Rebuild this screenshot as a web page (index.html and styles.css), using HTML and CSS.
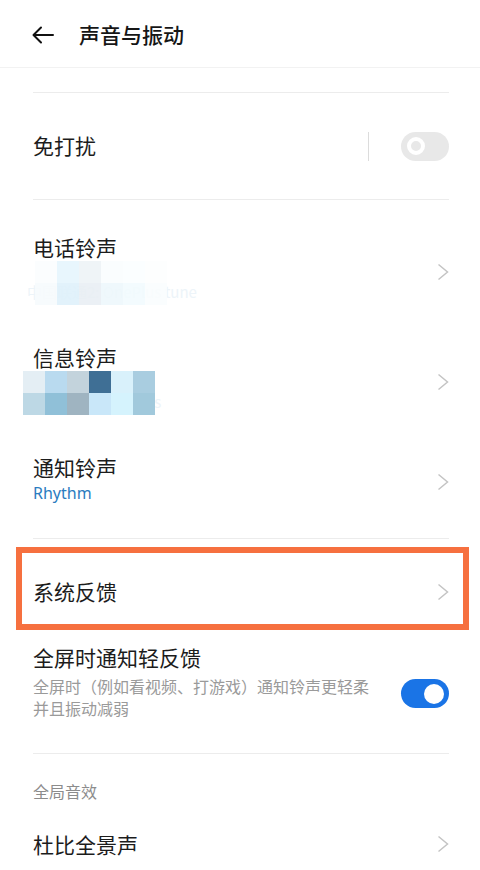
FILE: index.html
```html
<!DOCTYPE html>
<html lang="zh-CN">
<head>
    <meta charset="UTF-8">
    <meta name="viewport" content="width=device-width, initial-scale=1.0">
    <title>声音与振动</title>
    <link rel="stylesheet" href="styles.css">
</head>
<body>
    <header class="top-bar">
        <svg class="back-icon" width="22" height="18" viewBox="0 0 22 18">
            <path d="M21 9H2M9 1.5L1.5 9L9 16.5" fill="none" stroke="#111" stroke-width="2" stroke-linecap="round" stroke-linejoin="round"/>
        </svg>
        <h1 class="page-title">声音与振动</h1>
    </header>

    <div class="spacer"></div>
    <div class="divider"></div>

    <div class="row row-single">
        <span class="row-title">免打扰</span>
        <div class="row-right">
            <span class="v-sep"></span>
            <span class="switch switch-off"><span class="knob-ring"></span></span>
        </div>
    </div>
    <div class="divider"></div>

    <div class="row row-ring">
        <div class="row-text">
            <div class="row-title">电话铃声</div>
            <div class="mosaic mosaic-faint">
                <span class="mosaic-text">中国联通2: OnePlus tune</span>
                <div class="tiles">
                    <i style="background:#fbfdfe"></i><i style="background:#e6f6fd"></i><i style="background:#eef3f7"></i><i style="background:#fafdfe"></i><i style="background:#fbfeff"></i><i style="background:#fdfefe"></i>
                    <i style="background:#f7fbfd"></i><i style="background:#dff1fb"></i><i style="background:#e9eff4"></i><i style="background:#eef8fc"></i><i style="background:#f2fbfe"></i><i style="background:#fafdfe"></i>
                </div>
            </div>
        </div>
        <svg class="chevron" width="12" height="18" viewBox="0 0 12 18"><polyline points="1.5,1.5 10.5,9 1.5,16.5" fill="none" stroke="#c4c4c4" stroke-width="1.5"/></svg>
    </div>

    <div class="row row-ring">
        <div class="row-text">
            <div class="row-title">信息铃声</div>
            <div class="mosaic">
                <span class="mosaic-text">中国联通1: OnePlus</span>
                <div class="tiles tiles-strong">
                    <i style="background:#e4eef4"></i><i style="background:#b9daef"></i><i style="background:#c3d3dc"></i><i style="background:#3f6f95"></i><i style="background:#d9f1fb"></i><i style="background:#a9cde0"></i>
                    <i style="background:#bdd8e5"></i><i style="background:#90c0d8"></i><i style="background:#9fb4c1"></i><i style="background:#c9e7f9"></i><i style="background:#d5f3fd"></i><i style="background:#a1c9dc"></i>
                </div>
            </div>
        </div>
        <svg class="chevron" width="12" height="18" viewBox="0 0 12 18"><polyline points="1.5,1.5 10.5,9 1.5,16.5" fill="none" stroke="#c4c4c4" stroke-width="1.5"/></svg>
    </div>

    <div class="row row-ring row-last">
        <div class="row-text">
            <div class="row-title">通知铃声</div>
            <div class="row-value">Rhythm</div>
        </div>
        <svg class="chevron" width="12" height="18" viewBox="0 0 12 18"><polyline points="1.5,1.5 10.5,9 1.5,16.5" fill="none" stroke="#c4c4c4" stroke-width="1.5"/></svg>
    </div>
    <div class="divider"></div>

    <div class="highlight-box">
        <span class="row-title">系统反馈</span>
        <svg class="chevron" width="12" height="18" viewBox="0 0 12 18"><polyline points="1.5,1.5 10.5,9 1.5,16.5" fill="none" stroke="#c4c4c4" stroke-width="1.5"/></svg>
    </div>

    <div class="row row-desc">
        <div class="row-text">
            <div class="row-title">全屏时通知轻反馈</div>
            <div class="row-summary">全屏时（例如看视频、打游戏）通知铃声更轻柔并且振动减弱</div>
        </div>
        <span class="switch switch-on"><span class="knob"></span></span>
    </div>
    <div class="divider"></div>

    <div class="group-label">全局音效</div>

    <div class="row row-plain">
        <span class="row-title">杜比全景声</span>
        <svg class="chevron" width="12" height="18" viewBox="0 0 12 18"><polyline points="1.5,1.5 10.5,9 1.5,16.5" fill="none" stroke="#c4c4c4" stroke-width="1.5"/></svg>
    </div>
</body>
</html>
```

FILE: styles.css
```css
body {
    margin: 0;
    padding: 0;
    background: #fff;
    color: #1c1c1c;
    font-family: "Noto Sans CJK SC", "Noto Sans", sans-serif;
    width: 480px;
    overflow: hidden;
}
.top-bar {
    height: 67px;
    display: flex;
    align-items: center;
    padding-left: 32px;
    border-bottom: 1px solid #f2f2f2;
    box-sizing: content-box;
}
.back-icon {
    margin-top: 2px;
}
.page-title {
    margin: 0 0 0 25px;
    font-size: 21px;
    font-weight: 500;
    line-height: 28px;
    color: #161616;
}
.spacer {
    height: 24px;
}
.divider {
    height: 1px;
    background: #ececec;
    margin: 0 31px 0 33px;
}
.row {
    display: flex;
    justify-content: space-between;
    padding: 0 31px 0 33px;
}
.row-title {
    font-size: 21px;
    line-height: 28px;
    color: #1c1c1c;
}
.row-single {
    height: 106px;
    align-items: center;
}
.row-single .row-title {
    margin-top: -2px;
}
.row-right {
    display: flex;
    align-items: center;
    gap: 32px;
}
.v-sep {
    width: 1px;
    height: 29px;
    background: #dcdcdc;
}
.switch {
    width: 48px;
    height: 29px;
    border-radius: 15px;
    display: flex;
    align-items: center;
    box-sizing: border-box;
}
.switch-off {
    background: #e8e8e8;
    padding-left: 6px;
}
.knob-ring {
    width: 18px;
    height: 18px;
    border-radius: 50%;
    border: 4px solid #fff;
    box-sizing: border-box;
}
.switch-on {
    background: #1a74e6;
    justify-content: flex-end;
    padding-right: 5px;
    margin-top: 36px;
}
.knob {
    width: 20px;
    height: 20px;
    border-radius: 50%;
    background: #fff;
}
.row-ring {
    padding-top: 33px;
    padding-bottom: 5px;
    align-items: center;
}
.row-ring .chevron {
    margin-top: 6px;
}
.row-last {
    padding-bottom: 33px;
}
.row-value {
    font-size: 16px;
    line-height: 24px;
    color: #2b7cc0;
    font-family: "Noto Sans", sans-serif;
}
.mosaic {
    position: relative;
    height: 44px;
    width: 200px;
    margin-left: -10px;
}
.mosaic-text {
    position: absolute;
    left: 4px;
    top: 20px;
    font-size: 15px;
    color: #edf4f9;
    white-space: nowrap;
}
.tiles {
    position: absolute;
    left: 0;
    top: 0;
    display: grid;
    grid-template-columns: repeat(6, 22px);
    grid-template-rows: 22px 22px;
}
.mosaic-faint .tiles {
    left: 12px;
    opacity: 0.9;
}
.tiles-strong {
    opacity: 1;
}
.tiles i {
    display: block;
}
.highlight-box {
    margin: 8px 11px 0 16px;
    height: 83px;
    border: 6px solid #f6703f;
    box-sizing: border-box;
    padding: 24px 14px 0 11px;
    display: flex;
    justify-content: space-between;
}
.highlight-box .chevron {
    margin-top: 6px;
}
.row-desc {
    padding-top: 13px;
    padding-bottom: 34px;
    align-items: flex-start;
}
.row-summary {
    margin-top: 4px;
    width: 340px;
    font-size: 16px;
    line-height: 22px;
    color: #9a9a9a;
}
.group-label {
    padding: 26px 0 0 33px;
    font-size: 16px;
    line-height: 22px;
    color: #8c8c8c;
}
.row-plain {
    padding-top: 28px;
    align-items: center;
}
```
